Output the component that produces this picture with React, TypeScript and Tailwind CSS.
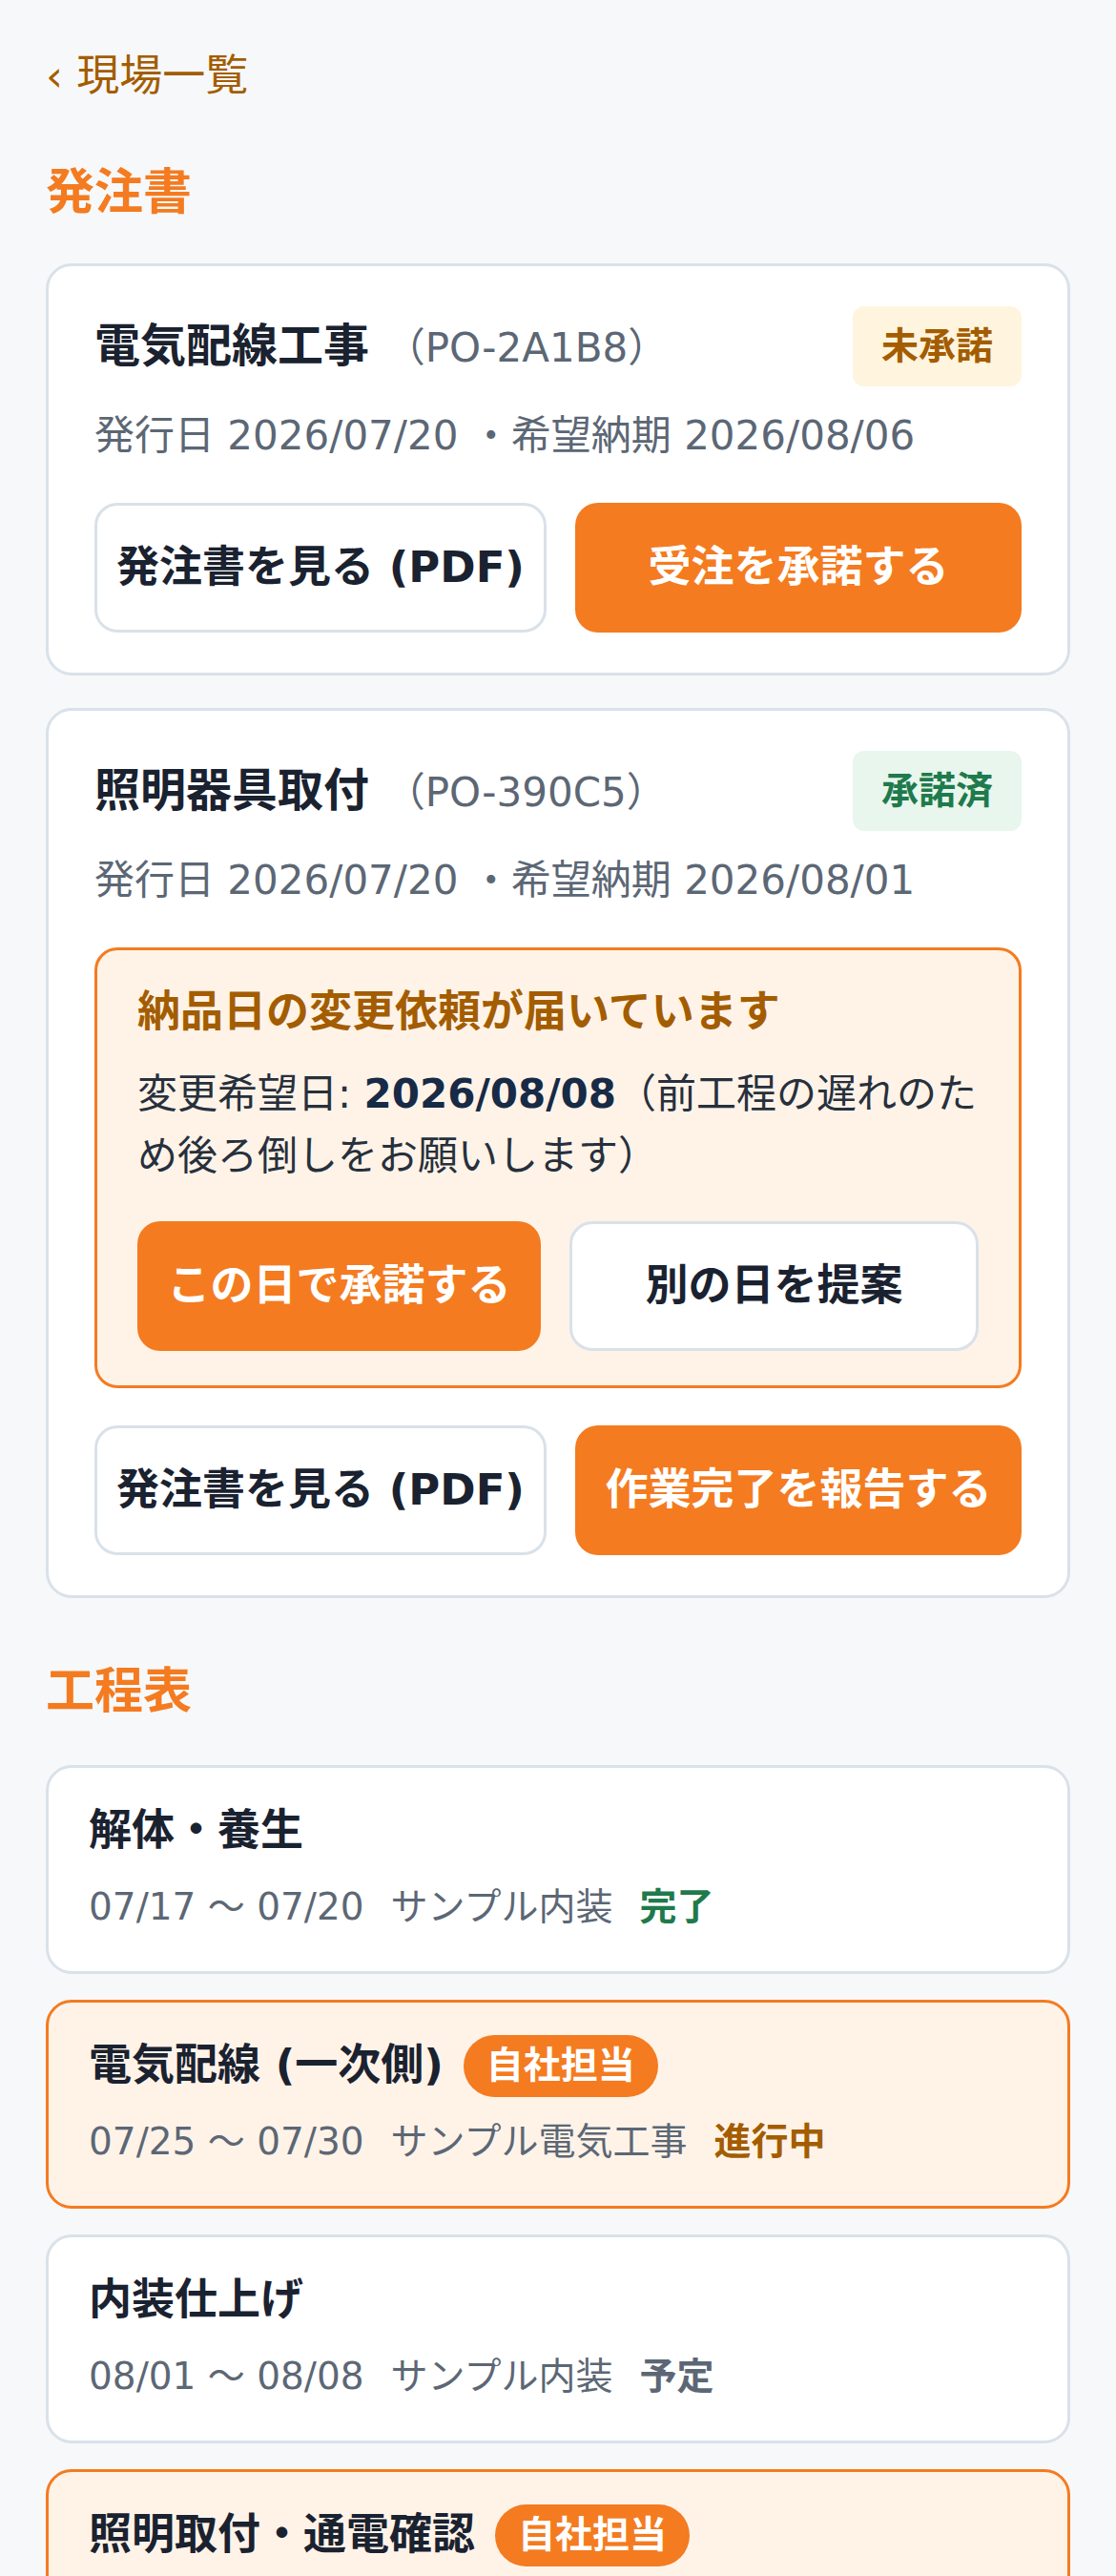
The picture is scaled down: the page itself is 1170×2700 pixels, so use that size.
type OrderStatus = 'pending' | 'accepted'

function StatusBadge({ status }: { status: OrderStatus }) {
  if (status === 'pending') {
    return (
      <span className="flex h-[84px] shrink-0 items-center rounded-[12px] bg-[#fff4de] px-[30px] text-[39px] font-bold text-[#a35d00]">
        未承諾
      </span>
    )
  }
  return (
    <span className="flex h-[84px] shrink-0 items-center rounded-[12px] bg-[#e8f6ee] px-[30px] text-[39px] font-bold text-[#1f7a4c]">
      承諾済
    </span>
  )
}

function OutlineButton({ children }: { children: React.ReactNode }) {
  return (
    <button className="flex h-[136px] flex-1 items-center justify-center rounded-[24px] border-[3px] border-[#d9e1e9] bg-white text-[45px] font-bold text-[#1a2230]">
      {children}
    </button>
  )
}

function SolidButton({ children }: { children: React.ReactNode }) {
  return (
    <button className="flex h-[136px] flex-1 items-center justify-center rounded-[24px] bg-[#f47b20] text-[45px] font-bold text-white">
      {children}
    </button>
  )
}

function OrderHeader({ name, code, status, issued, due }: { name: string; code: string; status: OrderStatus; issued: string; due: string }) {
  return (
    <>
      <div className="flex items-center justify-between">
        <h3 className="text-[48px] font-bold leading-[72px] text-[#1a2230]">
          {name} <span className="text-[42px] font-normal text-[#5c6775]">（{code}）</span>
        </h3>
        <StatusBadge status={status} />
      </div>
      <p className="mt-[20px] text-[42px] leading-[63px] text-[#5c6775]">
        発行日 {issued} ・希望納期 {due}
      </p>
    </>
  )
}

const schedule = [
  { title: '解体・養生', range: '07/17 〜 07/20', vendor: 'サンプル内装', status: '完了', statusClass: 'text-[#1f7a4c]', own: false },
  { title: '電気配線 (一次側)', range: '07/25 〜 07/30', vendor: 'サンプル電気工事', status: '進行中', statusClass: 'text-[#a35d00]', own: true },
  { title: '内装仕上げ', range: '08/01 〜 08/08', vendor: 'サンプル内装', status: '予定', statusClass: 'text-[#5c6775]', own: false },
  { title: '照明取付・通電確認', range: '08/09 〜 08/10', vendor: 'サンプル電気工事', status: '予定', statusClass: 'text-[#5c6775]', own: true },
]

export default function App() {
  return (
    <div className="min-h-screen bg-[#f7f8fa] px-[48px] pb-[120px] pt-[46px] font-['DejaVu_Sans','Noto_Sans_CJK_JP',sans-serif]">
      <a className="block text-[45px] leading-[67px] text-[#a35d00]">‹ 現場一覧</a>

      <h2 className="mt-[51px] text-[51px] font-bold leading-[76px] text-[#f47b20]">発注書</h2>

      <div className="mt-[36px] rounded-[27px] border-[3px] border-[#d9e1e9] bg-white px-[48px] py-[42px]">
        <OrderHeader name="電気配線工事" code="PO-2A1B8" status="pending" issued="2026/07/20" due="2026/08/06" />
        <div className="mt-[39px] flex gap-[30px]">
          <OutlineButton>発注書を見る (PDF)</OutlineButton>
          <SolidButton>受注を承諾する</SolidButton>
        </div>
      </div>

      <div className="mt-[34px] rounded-[27px] border-[3px] border-[#d9e1e9] bg-white px-[48px] py-[42px]">
        <OrderHeader name="照明器具取付" code="PO-390C5" status="accepted" issued="2026/07/20" due="2026/08/01" />

        <div className="mt-[39px] rounded-[24px] border-[3px] border-[#f47b20] bg-[#fff3e8] px-[42px] py-[36px]">
          <p className="text-[45px] font-bold leading-[58px] text-[#a35d00]">納品日の変更依頼が届いています</p>
          <p className="mt-[24px] text-[42px] leading-[65px] text-[#27303c]">
            変更希望日: <strong className="font-bold text-[#172a46]">2026/08/08</strong>（前工程の遅れのため後ろ倒しをお願いします）
          </p>
          <div className="mt-[36px] flex gap-[30px]">
            <SolidButton>この日で承諾する</SolidButton>
            <OutlineButton>別の日を提案</OutlineButton>
          </div>
        </div>

        <div className="mt-[39px] flex gap-[30px]">
          <OutlineButton>発注書を見る (PDF)</OutlineButton>
          <SolidButton>作業完了を報告する</SolidButton>
        </div>
      </div>

      <h2 className="mt-[60px] text-[51px] font-bold leading-[76px] text-[#f47b20]">工程表</h2>

      <div className="mt-[39px] flex flex-col gap-[27px]">
        {schedule.map((item) => (
          <div
            key={item.title}
            className={
              item.own
                ? 'rounded-[27px] border-[3px] border-[#f47b20] bg-[#fff3e8] px-[42px] py-[36px]'
                : 'rounded-[27px] border-[3px] border-[#d9e1e9] bg-white px-[42px] py-[36px]'
            }
          >
            <div className="flex h-[60px] items-center">
              <h4 className="text-[45px] font-bold leading-[60px] text-[#1a2230]">{item.title}</h4>
              {item.own && (
                <span className="ml-[21px] flex h-[65px] items-center rounded-full bg-[#f47b20] px-[24px] text-[39px] font-bold text-white">
                  自社担当
                </span>
              )}
            </div>
            <p className="mt-[18px] flex items-baseline gap-[28px] text-[39px] leading-[63px] text-[#5c6775]">
              <span>{item.range}</span>
              <span>{item.vendor}</span>
              <span className={'font-bold ' + item.statusClass}>{item.status}</span>
            </p>
          </div>
        ))}
      </div>
    </div>
  )
}
